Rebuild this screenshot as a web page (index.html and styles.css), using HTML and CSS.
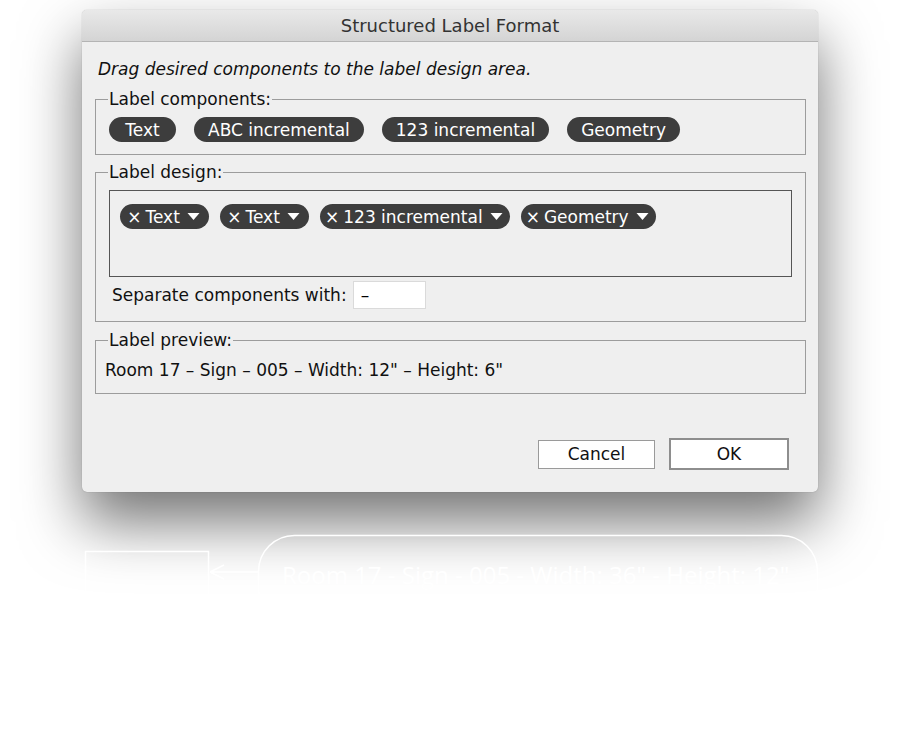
FILE: index.html
```html
<!DOCTYPE html>
<html lang="en">
<head>
    <meta charset="UTF-8">
    <title>Structured Label Format</title>
    <link rel="stylesheet" href="styles.css">
</head>
<body>
    <div class="dialog">
        <div class="titlebar">Structured Label Format</div>
        <div class="content">
            <p class="hint">Drag desired components to the label design area.</p>

            <fieldset class="group">
                <legend>Label components:</legend>
                <div class="chips">
                    <span class="chip chip-short">Text</span>
                    <span class="chip">ABC incremental</span>
                    <span class="chip">123 incremental</span>
                    <span class="chip">Geometry</span>
                </div>
            </fieldset>

            <fieldset class="group group-design">
                <legend>Label design:</legend>
                <div class="design-area">
                    <span class="chip chip-edit chip-short"><span class="remove">×</span>Text<svg class="caret" viewBox="0 0 12 8"><path d="M0 0h12L6 7z"/></svg></span>
                    <span class="chip chip-edit chip-short"><span class="remove">×</span>Text<svg class="caret" viewBox="0 0 12 8"><path d="M0 0h12L6 7z"/></svg></span>
                    <span class="chip chip-edit"><span class="remove">×</span>123 incremental<svg class="caret" viewBox="0 0 12 8"><path d="M0 0h12L6 7z"/></svg></span>
                    <span class="chip chip-edit"><span class="remove">×</span>Geometry<svg class="caret" viewBox="0 0 12 8"><path d="M0 0h12L6 7z"/></svg></span>
                </div>
                <div class="separator-row">
                    <label for="sep">Separate components with:</label>
                    <input type="text" id="sep" value="–">
                </div>
            </fieldset>

            <fieldset class="group group-preview">
                <legend>Label preview:</legend>
                <div class="preview">Room 17 – Sign – 005 – Width: 12" – Height: 6"</div>
            </fieldset>

            <div class="buttons">
                <button class="btn">Cancel</button>
                <button class="btn btn-default">OK</button>
            </div>
        </div>
    </div>

    <svg class="backdrop" width="900" height="735" viewBox="0 0 900 735">
        <g fill="none" stroke="#fff" stroke-width="1.5">
            <rect x="85.5" y="551.5" width="123" height="70"/>
            <path d="M258 572H210M210 572l14-7M210 572l14 7"/>
            <rect x="258.5" y="535.5" width="559" height="90" rx="36"/>
        </g>
        <text x="282" y="584" fill="#fff" font-family="Open Sans, sans-serif" font-size="24">Room 17 - Sign - 005 - Width: 36" - Height: 12"</text>
    </svg>
</body>
</html>
```

FILE: styles.css
```css
body {
    margin: 0;
    background: #fff;
    font-family: "DejaVu Sans", sans-serif;
    font-size: 17px;
    color: #111;
    position: relative;
    height: 735px;
    overflow: hidden;
}
.dialog {
    width: 736px;
    margin: 10px 0 0 82px;
    background: #efefef;
    border-radius: 5px;
    box-shadow: 0 30px 60px rgba(0, 0, 0, 0.55), 0 0 1px rgba(0, 0, 0, 0.35);
}
.titlebar {
    height: 31px;
    line-height: 32px;
    text-align: center;
    font-size: 18px;
    color: #333;
    background: linear-gradient(#e9e9e9, #d4d4d4);
    border-bottom: 1px solid #b4b4b4;
    border-radius: 5px 5px 0 0;
}
.content {
    padding: 17px 12px 22px 13px;
}
.hint {
    margin: 0 0 10px 3px;
    font-style: italic;
    line-height: 20px;
}
.group {
    margin: 0 0 7px;
    padding: 8px 9px 12px 13px;
    border: 1px solid #9c9c9c;
}
.group legend {
    padding: 0 1px;
    margin-left: -1px;
    line-height: 20px;
}
.group-design {
    padding-bottom: 12px;
}
.group-preview {
    margin-top: 8px;
    padding-top: 10px;
    padding-bottom: 13px;
}
.chips {
    display: flex;
    gap: 18px;
}
.chip {
    display: inline-flex;
    align-items: center;
    justify-content: center;
    height: 25px;
    padding: 0 14px;
    border-radius: 13px;
    background: #3d3d3d;
    color: #fff;
    font-size: 17px;
}
.chip-short {
    min-width: 67px;
    box-sizing: border-box;
}
.design-area {
    display: flex;
    gap: 11px;
    align-items: flex-start;
    height: 72px;
    padding: 13px 10px 0;
    border: 1px solid #555;
    margin-right: 4px;
}
.chip-edit {
    padding: 0 7px 0 5px;
}
.chip-edit.chip-short {
    min-width: 89px;
}
.remove {
    margin-right: 4px;
}
.caret {
    width: 13px;
    height: 8px;
    margin-left: 7px;
    fill: #fff;
}
.separator-row {
    display: flex;
    align-items: center;
    gap: 6px;
    margin: 4px 0 0 3px;
}
.separator-row input {
    width: 73px;
    height: 28px;
    padding: 0 7px;
    border: 1px solid #dadada;
    background: #fff;
    font: inherit;
    box-sizing: border-box;
}
.preview {
    line-height: 20px;
    margin-left: -4px;
}
.buttons {
    display: flex;
    justify-content: flex-end;
    gap: 14px;
    margin: 44px 17px 0 0;
    align-items: center;
}
.btn {
    font: inherit;
    background: #fff;
    border: 1px solid #9a9a9a;
    width: 117px;
    height: 29px;
    color: #111;
}
.btn-default {
    border: 2px solid #8e8e8e;
    width: 120px;
    height: 32px;
}
.backdrop {
    position: absolute;
    left: 0;
    top: 0;
    pointer-events: none;
}
```
